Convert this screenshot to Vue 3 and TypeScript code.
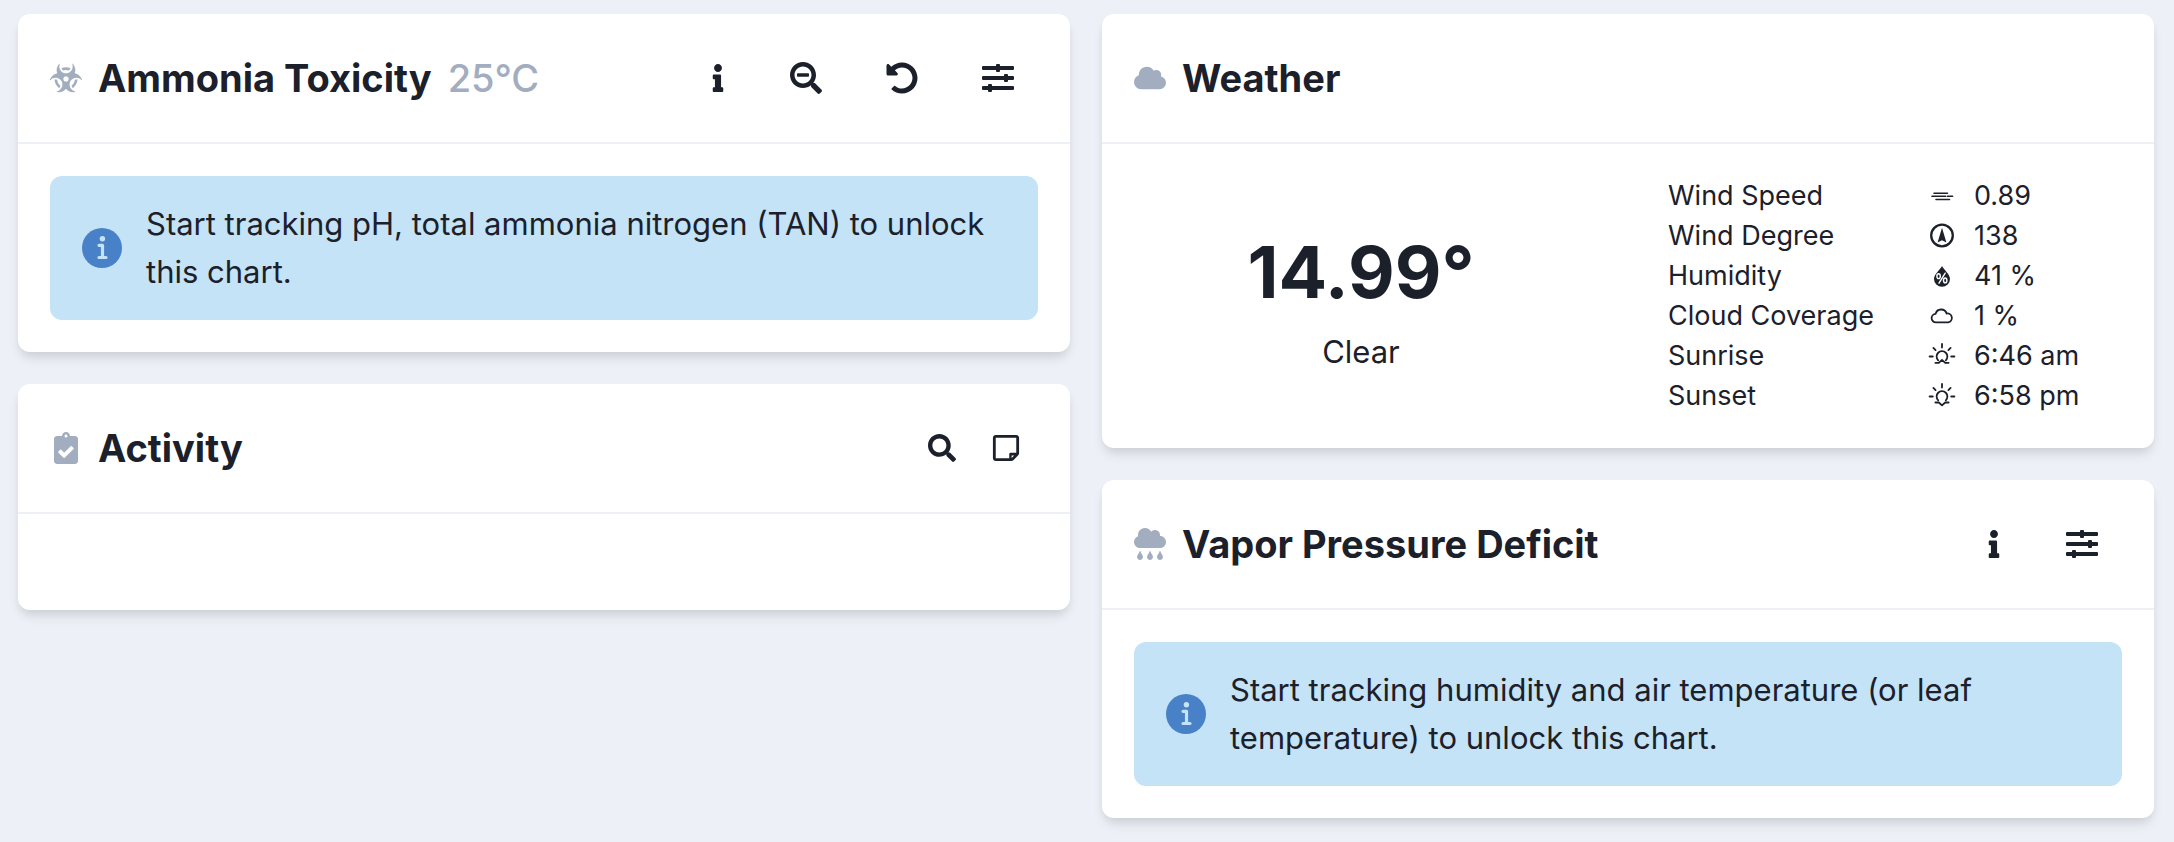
<script setup lang="ts">
interface Glyph {
  viewBox: string
  path: string
}

interface Action {
  icon: string
  label: string
}

interface Reading {
  label: string
  icon: string
  value: string
}

const glyphs: Record<string, Glyph> = {
  info: {
    viewBox: '0 0 192 512',
    path: 'M20 424.229h20V279.771H20c-11.046 0-20-8.954-20-20V212c0-11.046 8.954-20 20-20h112c11.046 0 20 8.954 20 20v212.229h20c11.046 0 20 8.954 20 20V492c0 11.046-8.954 20-20 20H20c-11.046 0-20-8.954-20-20v-47.771c0-11.046 8.954-20 20-20zM96 0C56.235 0 24 32.235 24 72s32.235 72 72 72 72-32.235 72-72S135.764 0 96 0z',
  },
  zoomOut: {
    viewBox: '0 0 512 512',
    path: 'M304 192v32c0 6.6-5.4 12-12 12H124c-6.6 0-12-5.4-12-12v-32c0-6.6 5.4-12 12-12h168c6.6 0 12 5.4 12 12zm201 284.7L476.7 505c-9.4 9.4-24.6 9.4-33.9 0L343 405.3c-4.5-4.5-7-10.6-7-17V372c-35.3 27.6-79.7 44-128 44C93.1 416 0 322.9 0 208S93.1 0 208 0s208 93.1 208 208c0 48.3-16.4 92.7-44 128h16.3c6.4 0 12.5 2.5 17 7l99.7 99.7c9.3 9.4 9.3 24.6 0 34zM344 208c0-75.2-60.8-136-136-136S72 132.8 72 208s60.8 136 136 136 136-60.8 136-136z',
  },
  undo: {
    viewBox: '0 0 512 512',
    path: 'M255.545 8c-66.269.119-126.438 26.233-170.86 68.685L48.971 40.971C33.851 25.851 8 36.559 8 57.941V192c0 13.255 10.745 24 24 24h134.059c21.382 0 32.09-25.851 16.971-40.971l-41.75-41.75c30.864-28.899 70.801-44.907 113.23-45.273 92.398-.798 170.283 73.977 169.484 169.442C423.236 348.009 349.816 424 256 424c-41.127 0-79.997-14.678-110.63-41.556-4.743-4.161-11.906-3.908-16.368.553L89.34 422.659c-4.872 4.872-4.631 12.815.482 17.433C133.798 479.813 192.074 504 256 504c136.966 0 247.999-111.033 248-247.998C504.001 119.193 392.354 7.755 255.545 8z',
  },
  sliders: {
    viewBox: '0 0 512 512',
    path: 'M16 64H224V48a16 16 0 0 1 16-16h32a16 16 0 0 1 16 16v16H496a16 16 0 0 1 16 16v32a16 16 0 0 1-16 16H288v16a16 16 0 0 1-16 16h-32a16 16 0 0 1-16-16v-16H16a16 16 0 0 1-16-16V80a16 16 0 0 1 16-16zM16 224H352v-16a16 16 0 0 1 16-16h32a16 16 0 0 1 16 16v16h80a16 16 0 0 1 16 16v32a16 16 0 0 1-16 16h-80v16a16 16 0 0 1-16 16h-32a16 16 0 0 1-16-16v-16H16a16 16 0 0 1-16-16v-32a16 16 0 0 1 16-16zM16 384h80v-16a16 16 0 0 1 16-16h32a16 16 0 0 1 16 16v16h336a16 16 0 0 1 16 16v32a16 16 0 0 1-16 16H160v16a16 16 0 0 1-16 16h-32a16 16 0 0 1-16-16v-16H16a16 16 0 0 1-16-16v-32a16 16 0 0 1 16-16z',
  },
  search: {
    viewBox: '0 0 512 512',
    path: 'M505 442.7L405.3 343c-4.5-4.5-10.6-7-17-7H372c27.6-35.3 44-79.7 44-128C416 93.1 322.9 0 208 0S0 93.1 0 208s93.1 208 208 208c48.3 0 92.7-16.4 128-44v16.3c0 6.4 2.5 12.5 7 17l99.7 99.7c9.4 9.4 24.6 9.4 33.9 0l28.3-28.3c9.4-9.4 9.4-24.6.1-34zM208 336c-70.7 0-128-57.2-128-128 0-70.7 57.2-128 128-128 70.7 0 128 57.2 128 128 0 70.7-57.2 128-128 128z',
  },
  note: {
    viewBox: '-16 16 480 480',
    path: 'M448 348.106V80c0-26.51-21.49-48-48-48H48C21.49 32 0 53.49 0 80v351.988c0 26.51 21.49 48 48 48h268.118a48 48 0 0 0 33.941-14.059l83.882-83.882A48 48 0 0 0 448 348.106zm-128 80.015v-44.12h44.12l-44.12 44.12zM400 80v256h-96a24 24 0 0 0-24 24v72H48V80h352z',
  },
  biohazard: {
    viewBox: '0 0 576 512',
    path: 'M287.9 112c18.6 0 36.2 3.8 52.8 9.6 13.3-10.3 23.6-24.3 29.5-40.7-25.2-10.9-53-17-82.2-17-29.1 0-56.9 6-82.1 16.9 5.9 16.4 16.2 30.4 29.5 40.7 16.5-5.7 34-9.5 52.5-9.5zM163.6 438.7c12-11.8 20.4-26.4 24.5-42.4-32.9-26.4-54.8-65.3-58.9-109.6-8.5-2.8-17.2-4.6-26.4-4.6-7.6 0-15.2 1-22.5 3.1 4.1 62.8 35.8 118 83.3 153.5zm224.2-42.6c4.1 16 12.5 30.7 24.5 42.5 47.4-35.5 79.1-90.7 83-153.5-7.2-2-14.7-3-22.2-3-9.2 0-18 1.9-26.6 4.7-4.1 44.2-26 82.9-58.7 109.3zm113.5-205c-17.6-10.4-36.3-16.6-55.3-19.9 6-17.7 10-36.4 10-56.2 0-41-14.5-80.8-41-112.2-2.5-3-6.6-3.7-10-1.8-3.3 1.9-4.8 6-3.6 9.7 4.5 13.8 6.6 26.3 6.6 38.5 0 67.8-53.8 122.9-120 122.9S168 117 168 49.2c0-12.1 2.2-24.7 6.6-38.5 1.2-3.7-.3-7.8-3.6-9.7-3.4-1.9-7.5-1.2-10 1.8C134.6 34.2 120 74 120 115c0 19.8 3.9 38.5 10 56.2-18.9 3.3-37.7 9.5-55.3 19.9-34.6 20.5-61 53.3-74.3 92.4-1.3 3.7.2 7.7 3.5 9.8 3.3 2 7.5 1.3 10-1.6 9.4-10.8 19-19.1 29.2-25.1 57.3-33.9 130.8-13.7 163.9 45 33.1 58.7 13.4 134-43.9 167.9-10.2 6.1-22 10.4-35.8 13.4-3.7.8-6.4 4.2-6.4 8.1.1 4 2.7 7.3 6.5 8 39.7 7.8 80.6.8 115.2-19.7 18-10.6 32.9-24.5 45.3-40.1 12.4 15.6 27.3 29.5 45.3 40.1 34.6 20.5 75.5 27.5 115.2 19.7 3.8-.7 6.4-4 6.5-8 0-3.9-2.6-7.3-6.4-8.1-13.9-2.9-25.6-7.3-35.8-13.4-57.3-33.9-77-109.2-43.9-167.9s106.6-78.9 163.9-45c10.2 6.1 19.8 14.3 29.2 25.1 2.5 2.9 6.7 3.6 10 1.6s4.8-6.1 3.5-9.8c-13.1-39.1-39.5-72-74.1-92.4zm-213.4 129c-26.5 0-48-21.5-48-48s21.5-48 48-48 48 21.5 48 48-21.5 48-48 48z',
  },
  clipboard: {
    viewBox: '0 0 384 512',
    path: 'M336 64h-80c0-35.3-28.7-64-64-64s-64 28.7-64 64H48C21.5 64 0 85.5 0 112v352c0 26.5 21.5 48 48 48h288c26.5 0 48-21.5 48-48V112c0-26.5-21.5-48-48-48zM192 40c13.3 0 24 10.7 24 24s-10.7 24-24 24-24-10.7-24-24 10.7-24 24-24zm121.2 231.8l-143 141.8c-4.7 4.7-12.3 4.6-17-.1l-82.6-83.3c-4.7-4.7-4.6-12.3.1-17L99.1 285c4.7-4.7 12.3-4.6 17 .1l46 46.4 106-105.2c4.7-4.7 12.3-4.6 17 .1l28.2 28.4c4.7 4.8 4.6 12.3-.1 17z',
  },
  cloud: {
    viewBox: '0 0 640 512',
    path: 'M537.6 226.6c4.1-10.7 6.4-22.4 6.4-34.6 0-53-43-96-96-96-19.7 0-38.1 6-53.3 16.2C367 64.2 315.3 32 256 32c-88.4 0-160 71.6-160 160 0 2.7.1 5.4.2 8.1C40.2 219.8 0 273.2 0 336c0 79.5 64.5 144 144 144h368c70.7 0 128-57.3 128-128 0-61.9-44-113.6-102.4-125.4z',
  },
  rain: {
    viewBox: '0 0 512 512',
    path: 'M416 128c-.6 0-1.1.2-1.6.2 1.1-5.2 1.6-10.6 1.6-16.2 0-44.2-35.8-80-80-80-24.6 0-46.3 11.3-61 28.8C256.4 24.8 219.3 0 176 0 114.1 0 64 50.1 64 112c0 7.3.8 14.3 2.1 21.2C27.8 145.8 0 181.5 0 224c0 53 43 96 96 96h320c53 0 96-43 96-96s-43-96-96-96zM88 374.2c-12.8 44.4-40 56.4-40 87.7 0 27.7 21.5 50.1 48 50.1s48-22.4 48-50.1c0-31.4-27.2-43.1-40-87.7-2.2-8.1-13.5-8.5-16 0zm160 0c-12.8 44.4-40 56.4-40 87.7 0 27.7 21.5 50.1 48 50.1s48-22.4 48-50.1c0-31.4-27.2-43.1-40-87.7-2.2-8.1-13.5-8.5-16 0zm160 0c-12.8 44.4-40 56.4-40 87.7 0 27.7 21.5 50.1 48 50.1s48-22.4 48-50.1c0-31.4-27.2-43.1-40-87.7-2.2-8.1-13.5-8.5-16 0z',
  },
}

const ammoniaActions: Action[] = [
  { icon: 'info', label: 'About ammonia toxicity' },
  { icon: 'zoomOut', label: 'Zoom out' },
  { icon: 'undo', label: 'Reset' },
  { icon: 'sliders', label: 'Ammonia toxicity settings' },
]

const activityActions: Action[] = [
  { icon: 'search', label: 'Search activity' },
  { icon: 'note', label: 'Add note' },
]

const deficitActions: Action[] = [
  { icon: 'info', label: 'About vapor pressure deficit' },
  { icon: 'sliders', label: 'Vapor pressure deficit settings' },
]

const readings: Reading[] = [
  { label: 'Wind Speed', icon: 'wind', value: '0.89' },
  { label: 'Wind Degree', icon: 'compass', value: '138' },
  { label: 'Humidity', icon: 'humidity', value: '41 %' },
  { label: 'Cloud Coverage', icon: 'cover', value: '1 %' },
  { label: 'Sunrise', icon: 'sunrise', value: '6:46 am' },
  { label: 'Sunset', icon: 'sunset', value: '6:58 pm' },
]
</script>

<template>
  <main class="dashboard">
    <div class="column">
      <section class="card">
        <header class="card-header">
          <svg class="title-icon" :viewBox="glyphs.biohazard.viewBox" aria-hidden="true"><path :d="glyphs.biohazard.path" /></svg>
          <h2 class="title">Ammonia Toxicity</h2>
          <span class="subtitle">25°C</span>
          <div class="actions">
            <button v-for="a in ammoniaActions" :key="a.icon" type="button" class="action" :aria-label="a.label">
              <svg class="action-icon" :class="a.icon" :viewBox="glyphs[a.icon].viewBox"><path :d="glyphs[a.icon].path" /></svg>
            </button>
          </div>
        </header>
        <div class="card-body">
          <div class="notice">
            <svg class="notice-icon" viewBox="0 0 40 40" aria-hidden="true">
              <circle class="notice-disc" cx="20" cy="20" r="20" />
              <circle class="notice-dot" cx="20.4" cy="10.8" r="2.7" />
              <path class="notice-stem" d="M17 17.3h3.5v12.2M17 29.5h7" />
            </svg>
            <p class="notice-text">Start tracking pH, total ammonia nitrogen (TAN) to unlock this chart.</p>
          </div>
        </div>
      </section>

      <section class="card">
        <header class="card-header">
          <svg class="title-icon" :viewBox="glyphs.clipboard.viewBox" aria-hidden="true"><path :d="glyphs.clipboard.path" /></svg>
          <h2 class="title">Activity</h2>
          <div class="actions compact">
            <button v-for="a in activityActions" :key="a.icon" type="button" class="action" :aria-label="a.label">
              <svg class="action-icon" :class="a.icon" :viewBox="glyphs[a.icon].viewBox"><path :d="glyphs[a.icon].path" /></svg>
            </button>
          </div>
        </header>
        <div class="card-body empty"></div>
      </section>
    </div>

    <div class="column">
      <section class="card">
        <header class="card-header">
          <svg class="title-icon" :viewBox="glyphs.cloud.viewBox" aria-hidden="true"><path :d="glyphs.cloud.path" /></svg>
          <h2 class="title">Weather</h2>
        </header>
        <div class="weather">
          <div class="current">
            <p class="temperature">14.99°</p>
            <p class="condition">Clear</p>
          </div>
          <table class="readings">
            <tbody>
              <tr v-for="r in readings" :key="r.label">
                <th scope="row">{{ r.label }}</th>
                <td class="reading-icon">
                  <svg viewBox="0 0 28 28" aria-hidden="true">
                    <g v-if="r.icon === 'wind'" class="line fine">
                      <path d="M6 11.3h13.5M4 14.3h13.6M19.4 14.3h5.2M8 17.5h13.5" />
                    </g>
                    <g v-else-if="r.icon === 'compass'">
                      <circle class="line bold" cx="14" cy="13.5" r="10.8" />
                      <path d="M14 5.7L18.4 20.4L14 18.2L9.6 20.4z" />
                    </g>
                    <g v-else-if="r.icon === 'humidity'">
                      <path d="M14 4C16 7.8 22 12.4 22 17a8 7.8 0 0 1-16 0C6 12.4 12 7.8 14 4z" />
                      <g class="line cutout">
                        <ellipse cx="10.6" cy="14.2" rx="1.7" ry="2.4" />
                        <ellipse cx="17.2" cy="18.4" rx="1.7" ry="2.4" />
                        <path d="M17.2 11.2L11 21.2" />
                      </g>
                    </g>
                    <g v-else-if="r.icon === 'cover'" class="line">
                      <path d="M8 20.3a4.2 4.2 0 0 1-.4-8.4a5.7 5.7 0 0 1 11-.4a4.4 4.4 0 0 1 1.6 8.8z" />
                    </g>
                    <g v-else class="line">
                      <path d="M14 2v3.6M1.6 14.5h3.2M23.2 14.5h3.2M5.4 5.9l2.2 2.2M22.6 5.9l-2.2 2.2" />
                      <path d="M10.2 18.4a5.4 5.4 0 1 1 7.6 0" />
                      <path v-if="r.icon === 'sunrise'" d="M7.4 20.8h3.4L14 17.9l3.2 2.9h3.4" />
                      <path v-else d="M7.4 20.5h3.4L14 23.4l3.2-2.9h3.4" />
                    </g>
                  </svg>
                </td>
                <td>{{ r.value }}</td>
              </tr>
            </tbody>
          </table>
        </div>
      </section>

      <section class="card">
        <header class="card-header">
          <svg class="title-icon" :viewBox="glyphs.rain.viewBox" aria-hidden="true"><path :d="glyphs.rain.path" /></svg>
          <h2 class="title">Vapor Pressure Deficit</h2>
          <div class="actions">
            <button v-for="a in deficitActions" :key="a.icon" type="button" class="action" :aria-label="a.label">
              <svg class="action-icon" :class="a.icon" :viewBox="glyphs[a.icon].viewBox"><path :d="glyphs[a.icon].path" /></svg>
            </button>
          </div>
        </header>
        <div class="card-body">
          <div class="notice">
            <svg class="notice-icon" viewBox="0 0 40 40" aria-hidden="true">
              <circle class="notice-disc" cx="20" cy="20" r="20" />
              <circle class="notice-dot" cx="20.4" cy="10.8" r="2.7" />
              <path class="notice-stem" d="M17 17.3h3.5v12.2M17 29.5h7" />
            </svg>
            <p class="notice-text">Start tracking humidity and air temperature (or leaf temperature) to unlock this chart.</p>
          </div>
        </div>
      </section>
    </div>
  </main>
</template>

<style>
body {
  margin: 0;
  background: #edf0f6;
}
</style>

<style scoped>
.dashboard {
  display: grid;
  grid-template-columns: 1fr 1fr;
  align-items: start;
  gap: 32px;
  padding: 14px 20px 16px 18px;
  color: #1b202b;
  font-family: Inter, "Open Sans", sans-serif;
  font-size: 31px;
  line-height: 48px;
}

.column {
  display: grid;
  gap: 32px;
  min-width: 0;
}

.card {
  background: #fff;
  border-radius: 12px;
  box-shadow: 0 8px 12px -2px rgba(0, 0, 0, 0.1), 0 4px 8px -2px rgba(0, 0, 0, 0.06);
}

.card-header {
  display: flex;
  align-items: center;
  height: 128px;
  padding-left: 32px;
  border-bottom: 2px solid #edf1f6;
}

.title-icon {
  width: 32px;
  height: 32px;
  margin-right: 16px;
  fill: #a2aec0;
}

.title {
  margin: 0;
  font-size: 38px;
  font-weight: 700;
}

.subtitle {
  margin-left: 16px;
  color: #a2aec0;
  font-size: 38px;
  font-weight: 500;
}

.actions {
  display: flex;
  margin-left: auto;
  padding-right: 24px;
}

.action {
  display: flex;
  align-items: center;
  justify-content: center;
  height: 64px;
  padding: 0 32px;
  border: 0;
  background: none;
  cursor: pointer;
}

.action-icon {
  width: 32px;
  height: 32px;
  fill: #1b202b;
}

.action-icon.info {
  width: 16px;
  height: 28px;
}

.actions.compact {
  padding-right: 32px;
}

.compact .action {
  padding: 0 18px;
}

.compact .action-icon {
  width: 28px;
  height: 28px;
}

.card-body {
  padding: 32px;
}

.card-body.empty {
  min-height: 32px;
}

.notice {
  display: flex;
  align-items: center;
  gap: 24px;
  padding: 24px 32px;
  border-radius: 12px;
  background: #c4e3f7;
}

.notice-icon {
  flex: none;
  width: 40px;
  height: 40px;
}

.notice-disc {
  fill: #4881c8;
}

.notice-dot {
  fill: #c4e3f7;
}

.notice-stem {
  fill: none;
  stroke: #c4e3f7;
  stroke-width: 3.2;
  stroke-linecap: round;
  stroke-linejoin: round;
}

.notice-text {
  margin: 0;
}

.weather {
  display: grid;
  grid-template-columns: 1fr 1fr;
  align-items: center;
  padding: 32px 16px 32px 0;
}

.current {
  padding-top: 8px;
  text-align: center;
}

.temperature {
  margin: 0;
  font-size: 72px;
  font-weight: 700;
  line-height: 96px;
}

.condition {
  margin: 8px 0 0;
}

.readings {
  margin-left: 48px;
  border-collapse: collapse;
  justify-self: start;
  font-size: 27px;
  line-height: 40px;
}

.readings th,
.readings td {
  padding: 0;
  font-weight: 400;
  text-align: left;
  white-space: nowrap;
}

.readings th {
  min-width: 260px;
}

.reading-icon {
  min-width: 46px;
}

.reading-icon svg {
  display: block;
  width: 28px;
  height: 28px;
  fill: #1b202b;
}

.reading-icon .line {
  fill: none;
  stroke: #1b202b;
  stroke-width: 1.8;
  stroke-linecap: round;
  stroke-linejoin: round;
}

.reading-icon .fine {
  stroke-width: 1.6;
}

.reading-icon .bold {
  stroke-width: 2.3;
}

.reading-icon .cutout {
  stroke: #fff;
  stroke-width: 1.4;
}
</style>
